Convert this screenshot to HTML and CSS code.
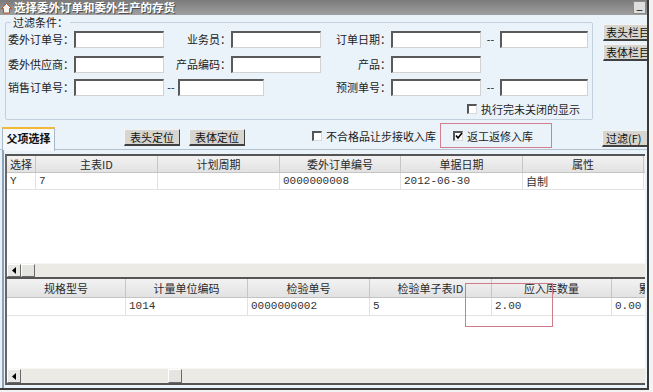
FILE: index.html
```html
<!DOCTYPE html>
<html>
<head>
<meta charset="utf-8">
<title>选择委外订单和委外生产的存货</title>
<link rel="stylesheet" href="styles.css">
</head>
<body>
<div class="window">
  <div class="titlebar">
    <svg class="ticon" width="11" height="12" viewBox="0 0 11 12"><path d="M0.5 6.5 L5.5 1.5 L10.5 6.5 L8.5 6.5 L8.5 11 L2.5 11 L2.5 6.5 Z" fill="#f4f4f4" stroke="#b8561e" stroke-width="1"/></svg>
    <span class="ttext">选择委外订单和委外生产的存货</span>
    <span class="tmin">_</span>
  </div>

  <div class="top">
    <fieldset class="filter">
      <legend>过滤条件：</legend>
      <div class="frow r1">
        <span class="lb w68">委外订单号：</span><span class="inp w90"></span>
        <span class="lb w67">业务员：</span><span class="inp w90"></span>
        <span class="lb w70">订单日期：</span><span class="inp w90"></span>
        <span class="dash w19">--</span><span class="inp w88"></span>
      </div>
      <div class="frow r2">
        <span class="lb w68">委外供应商：</span><span class="inp w90"></span>
        <span class="lb w67">产品编码：</span><span class="inp w90"></span>
        <span class="lb w70">产品：</span><span class="inp w90"></span>
      </div>
      <div class="frow r3">
        <span class="lb w68">销售订单号：</span><span class="inp w90"></span>
        <span class="dash w14">--</span><span class="inp w86"></span>
        <span class="lb w127">预测单号：</span><span class="inp w90"></span>
        <span class="dash w19">--</span><span class="inp w88"></span>
      </div>
      <div class="crow">
        <span class="box"></span><span class="ctext">执行完未关闭的显示</span>
      </div>
    </fieldset>
    <div class="side">
      <div class="btn sbtn">表头栏目</div>
      <div class="btn sbtn">表体栏目</div>
    </div>
  </div>

  <div class="tabrow">
    <div class="tab">父项选择</div>
    <div class="btn b1">表头定位</div>
    <div class="btn b2">表体定位</div>
    <div class="chk c1"><span class="box"></span><span class="ctext">不合格品让步接收入库</span></div>
    <div class="mark"><span class="box checked"><svg width="8" height="8" viewBox="0 0 8 8"><path d="M1 3.5 L3 6 L7 1" fill="none" stroke="#000" stroke-width="1.6"/></svg></span><span class="ctext">返工返修入库</span></div>
    <div class="btn b3">过滤(F)</div>
  </div>

  <div class="panel">
    <div class="grid g1">
      <div class="ghead">
        <span class="hc c30">选择</span><span class="hc c122">主表ID</span><span class="hc c122">计划周期</span><span class="hc c121">委外订单编号</span><span class="hc c122">单据日期</span><span class="hc c121">属性</span>
      </div>
      <div class="grow">
        <span class="dc c30">Y</span><span class="dc c122">7</span><span class="dc c122"></span><span class="dc c121">0000000008</span><span class="dc c122">2012-06-30</span><span class="dc c121 cjk">自制</span>
      </div>
      <div class="gbody"></div>
      <div class="hscroll">
        <span class="sarrow"><svg width="4" height="7" viewBox="0 0 4 7"><path d="M4 0 L0 3.5 L4 7 Z" fill="#000"/></svg></span>
        <span class="strack"><span class="thumb t1"></span></span>
      </div>
    </div>
    <div class="grid g2">
      <div class="ghead tall">
        <span class="hc c119">规格型号</span><span class="hc c122">计量单位编码</span><span class="hc c122">检验单号</span><span class="hc c122">检验单子表ID</span><span class="hc c120">应入库数量</span><span class="hc c120">累计入库数量</span>
      </div>
      <div class="grow r18">
        <span class="dc c119"></span><span class="dc c122">1014</span><span class="dc c122">0000000002</span><span class="dc c122">5</span><span class="dc c120">2.00</span><span class="dc c120">0.00</span>
      </div>
      <div class="gbody"></div>
      <div class="hscroll s15">
        <span class="sarrow"><svg width="4" height="7" viewBox="0 0 4 7"><path d="M4 0 L0 3.5 L4 7 Z" fill="#000"/></svg></span>
        <span class="strack"><span class="thumb t2"></span></span>
      </div>
      <div class="redmark"></div>
    </div>
  </div>
</div>
</body>
</html>
```

FILE: styles.css
```css
* { box-sizing: border-box; }
html, body { margin: 0; padding: 0; }
body {
  width: 653px;
  height: 392px;
  overflow: hidden;
  background: #f3f3f3;
  font-family: "Noto Sans CJK SC", "Liberation Sans", sans-serif;
  font-size: 11px;
  color: #1c1c1c;
}
.window {
  width: 649px;
  height: 390px;
  background: #eaf2fa;
  border-right: 2px solid #3a3a3a;
  border-bottom: 2px solid #3a3a3a;
  display: flex;
  flex-direction: column;
  overflow: hidden;
}

/* title bar */
.titlebar {
  flex: none;
  height: 15px;
  display: flex;
  align-items: center;
  background: linear-gradient(#7a7a7a, #a0a0a0);
}
.ticon { margin-left: 1px; flex: none; }
.ttext {
  margin-left: 2px;
  color: #fff;
  font-weight: bold;
  font-size: 11.5px;
  line-height: 15px;
  text-shadow: 1px 1px 0 #505050;
  white-space: nowrap;
}
.tmin {
  flex: none;
  margin-left: auto;
  margin-right: 1px;
  width: 13px;
  height: 13px;
  background: #dedede;
  border: 1px solid #8a8a8a;
  font-family: "Liberation Sans", sans-serif;
  font-size: 10px;
  line-height: 8px;
  text-align: center;
  color: #000;
}

/* top filter area */
.top {
  flex: none;
  height: 108px;
  display: flex;
  align-items: flex-start;
}
.filter {
  flex: none;
  margin: 0 0 0 5px;
  padding: 0 0 3px 0;
  width: 588px;
  height: 105px;
  border: 1px solid #c3d0dd;
  border-radius: 2px;
  display: flex;
  flex-direction: column;
}
.filter legend {
  margin-left: 5px;
  padding: 0 2px;
  font-size: 11px;
  line-height: 14px;
}
.frow {
  display: flex;
  align-items: center;
  height: 17px;
  flex: none;
}
.r1 { margin-top: 2px; }
.r2 { margin-top: 8px; }
.r3 { margin-top: 6px; }
.lb {
  flex: none;
  text-align: right;
  line-height: 17px;
  white-space: nowrap;
}
.dash {
  flex: none;
  text-align: center;
  line-height: 17px;
  font-family: "Liberation Sans", sans-serif;
  color: #333;
}
.inp {
  flex: none;
  height: 17px;
  background: #fff;
  border-top: 2px solid #5a5a5a;
  border-left: 2px solid #5a5a5a;
  border-right: 1px solid #d2d2d2;
  border-bottom: 1px solid #d2d2d2;
}
.w14 { width: 14px; }
.w19 { width: 19px; }
.w67 { width: 67px; }
.w68 { width: 68px; }
.w70 { width: 70px; }
.w86 { width: 86px; }
.w88 { width: 88px; }
.w90 { width: 90px; }
.w127 { width: 127px; }

.crow {
  flex: none;
  margin-top: 6px;
  height: 14px;
  display: flex;
  align-items: center;
  justify-content: flex-end;
  padding-right: 12px;
}
.box {
  flex: none;
  width: 10px;
  height: 10px;
  background: #fff;
  border-top: 2px solid #555;
  border-left: 2px solid #555;
  border-right: 1px solid #d8d8d8;
  border-bottom: 1px solid #d8d8d8;
  display: flex;
  align-items: center;
  justify-content: center;
}
.box svg { display: block; flex: none; }
.ctext {
  flex: none;
  margin-left: 4px;
  line-height: 14px;
  white-space: nowrap;
}

.side {
  flex: none;
  margin-left: 10px;
  padding-top: 9px;
  display: flex;
  flex-direction: column;
  gap: 3px;
}
.btn {
  flex: none;
  height: 17px;
  background: #d6d5d0;
  border-top: 1px solid #f4f4f4;
  border-left: 1px solid #f4f4f4;
  border-right: 1px solid #404040;
  border-bottom: 2px solid #404040;
  line-height: 14px;
  text-align: center;
  white-space: nowrap;
  color: #111;
  overflow: hidden;
}
.sbtn {
  width: 55px;
  text-align: left;
  padding-left: 2px;
}

/* tab row */
.tabrow {
  flex: none;
  height: 27px;
  display: flex;
  align-items: flex-start;
  border-bottom: 1px solid #b4c2d0;
}
.tab {
  flex: none;
  margin-left: 2px;
  margin-top: 4px;
  width: 53px;
  height: 24px;
  background: #f4f7fb;
  border-top: 2px solid #f2b838;
  border-left: 1px solid #a9b7c6;
  border-right: 1px solid #a9b7c6;
  font-weight: bold;
  line-height: 19px;
  text-align: center;
  color: #111;
}
.b1 { margin-left: 69px; margin-top: 6px; width: 56px; }
.b2 { margin-left: 9px; margin-top: 6px; width: 56px; }
.chk {
  flex: none;
  margin-left: 67px;
  margin-top: 6px;
  width: 128px;
  height: 14px;
  display: flex;
  align-items: center;
}
.mark {
  flex: none;
  width: 112px;
  height: 25px;
  border: 1.5px solid #d0808e;
  padding-left: 12px;
  display: flex;
  align-items: center;
}
.b3 { margin-left: 50px; margin-top: 7px; width: 52px; text-align: left; padding-left: 3px; }

/* panel with grids */
.panel {
  flex: 1;
  margin-left: 2px;
  border-left: 2px solid #8ca2ba;
  padding: 4px 0 3px 1px;
  display: flex;
  flex-direction: column;
}
.grid {
  position: relative;
  flex: none;
  width: 640px;
  background: #fff;
  border-top: 2px solid #555;
  border-left: 2px solid #666;
  display: flex;
  flex-direction: column;
  overflow: hidden;
}
.g1 { height: 123px; }
.g2 { height: 108px; border-bottom: 2px solid #555; }
.ghead {
  flex: none;
  height: 17px;
  display: flex;
  background: linear-gradient(#f2f2f2, #e2e2e2);
  border-bottom: 1px solid #c4c4c4;
}
.ghead.tall { height: 19px; }
.hc {
  flex: none;
  border-right: 1px solid #c6c6c6;
  text-align: center;
  line-height: 16px;
  white-space: nowrap;
  color: #2a2a2a;
}
.tall .hc { line-height: 18px; }
.grow {
  flex: none;
  height: 17px;
  display: flex;
  border-bottom: 1px solid #e2e2e2;
}
.grow.r18 { height: 18px; }
.dc {
  flex: none;
  border-right: 1px solid #e2e2e2;
  padding-left: 3px;
  font-family: "Liberation Mono", monospace;
  font-size: 11px;
  line-height: 16px;
  color: #333;
  white-space: nowrap;
}
.r18 .dc { line-height: 17px; }
.dc.cjk { font-family: "Noto Sans CJK SC", sans-serif; }
.c30 { width: 29px; }
.c119 { width: 119px; }
.c120 { width: 120px; }
.c121 { width: 121px; }
.c122 { width: 122px; }
.gbody { flex: 1; background: #fff; }
.hscroll {
  flex: none;
  height: 14px;
  display: flex;
  background: #ebeae5;
  border-top: 1px solid #f6f6f2;
}
.hscroll.s15 { height: 15px; }
.sarrow {
  flex: none;
  width: 14px;
  background: #e8e8e4;
  border-top: 1px solid #fff;
  border-left: 1px solid #fff;
  border-right: 1px solid #6a6a6a;
  border-bottom: 1px solid #6a6a6a;
  display: flex;
  align-items: center;
  justify-content: center;
}
.strack { flex: 1; display: flex; }
.thumb {
  flex: none;
  width: 14px;
  background: #e4e4e0;
  border-top: 1px solid #fff;
  border-left: 1px solid #fff;
  border-right: 1px solid #6a6a6a;
  border-bottom: 1px solid #6a6a6a;
}
.t1 { margin-left: 0; }
.t2 { margin-left: 147px; }
.redmark {
  position: absolute;
  left: 458px;
  top: 4px;
  width: 88px;
  height: 44px;
  border: 1.5px solid #cf7c8a;
}
```
